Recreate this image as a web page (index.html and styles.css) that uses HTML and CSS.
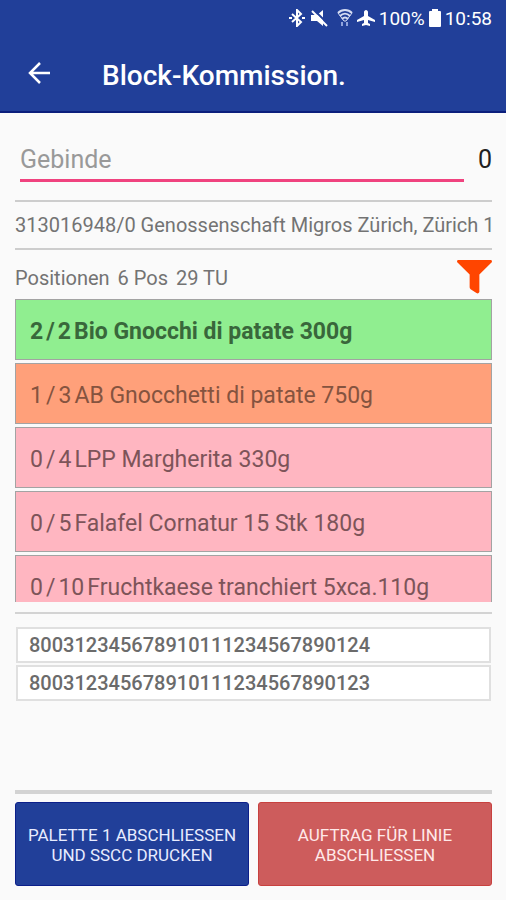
FILE: index.html
```html
<!DOCTYPE html>
<html lang="de">
<head>
    <meta charset="UTF-8">
    <meta name="viewport" content="width=device-width, initial-scale=1.0">
    <title>Block-Kommission</title>
    <link rel="stylesheet" href="styles.css">
</head>
<body>
    <header class="header">
        <div class="status">
            <svg width="18" height="18" viewBox="0 0 18 18" fill="none" stroke="#fff" stroke-width="2">
                <path d="M4 5l9 8-4 4V1l4 4-9 8"/>
                <path d="M1 9h3M14 9h3"/>
            </svg>
            <svg class="icon_mute" width="18" height="18" viewBox="0 0 18 18">
                <path d="M1 6h6l6-5v16l-6-5H1z" fill="#fff"/>
                <path d="M4 1l14 14" fill="none" stroke="#213f99" stroke-width="2"/>
                <path d="M2 2l15 15" fill="none" stroke="#fff" stroke-width="2"/>
            </svg>
            <svg width="16" height="18" viewBox="0 0 16 18" fill="none" stroke="#d5dcf2" stroke-width="2">
                <path d="M1 4c4-4 10-4 14 0M3 7c3-3 7-3 10 0M5 10c2-2 4-2 6 0"/>
                <path d="M1 4l6 8h2l6-8" stroke-width="1"/>
                <path d="M5 13v4M10 13v4" stroke="#8fa3dc"/>
            </svg>
            <svg width="18" height="18" viewBox="0 0 18 18" fill="#fff">
                <path d="M9 1c1 0 2 1 2 2v4l7 4v2l-7-2v3l2 1v2l-4-1-4 1v-2l2-1v-3l-7 2v-2l7-4V3c0-1 1-2 2-2z"/>
            </svg>
            <span>100%</span>
            <svg width="12" height="18" viewBox="0 0 12 18" fill="#fff">
                <path d="M3 0h6v2h2q1 0 1 1v14q0 1-1 1H1q-1 0-1-1V3q0-1 1-1h2z"/>
            </svg>
            <span>10:58</span>
        </div>
        <div class="toolbar">
            <button class="but_back" type="button" aria-label="Zurück">
                <svg width="24" height="24" viewBox="0 0 24 24" fill="none" stroke="#fff" stroke-width="2.5">
                    <path d="M23 11H3M13 1L3 11l10 10"/>
                </svg>
            </button>
            <h1>Block-Kommission.</h1>
        </div>
    </header>
    <main>
        <div class="sec_input">
            <input class="input_gebinde" type="text" placeholder="Gebinde" aria-label="Gebinde">
            <span class="count">0</span>
        </div>
        <p class="order">313016948/0 Genossenschaft Migros Zürich, Zürich 1</p>
        <div class="sec_pos">
            <span>Positionen</span>
            <span>6 Pos</span>
            <span>29 TU</span>
            <button class="but_filter" type="button" aria-label="Filter">
                <svg width="35" height="35" viewBox="0 0 36 36" fill="#ff4500">
                    <path d="M1 0h34q1 0 1 2L23 15v18q-1 2-3 1l-6-4q-1-1-1-2V15L0 2q0-2 1-2z"/>
                </svg>
            </button>
        </div>
        <ul class="positions">
            <li class="done"><span>2</span><span>/</span><span>2</span><span>Bio Gnocchi di patate 300g</span></li>
            <li class="partial"><span>1</span><span>/</span><span>3</span><span>AB Gnocchetti di patate 750g</span></li>
            <li><span>0</span><span>/</span><span>4</span><span>LPP Margherita 330g</span></li>
            <li><span>0</span><span>/</span><span>5</span><span>Falafel Cornatur 15 Stk 180g</span></li>
            <li><span>0</span><span>/</span><span>10</span><span>Fruchtkaese tranchiert 5xca.110g</span></li>
        </ul>
        <ul class="sscc">
            <li>800312345678910111234567890124</li>
            <li>800312345678910111234567890123</li>
        </ul>
        <div class="sec_buttons">
            <button class="but_palette" type="button">PALETTE 1 ABSCHLIESSEN UND SSCC DRUCKEN</button>
            <button class="but_order" type="button">AUFTRAG FÜR LINIE ABSCHLIESSEN</button>
        </div>
    </main>
</body>
</html>
```
FILE: styles.css
```css
*{
    box-sizing: border-box;
    font-family: Roboto, "Liberation Sans", sans-serif;
}
body{
    margin: 0;
    min-height: 100vh;
    display: flex;
    flex-direction: column;
    background-color: #fafafa;
    color: #737373;
}
.header{
    background-color: #213f99;
    border-bottom: 2px solid #0b1f7c;
    color: #fff;
}
.status{
    display: flex;
    justify-content: flex-end;
    align-items: center;
    gap: 4px;
    height: 36px;
    padding-right: 14px;
    font-size: 19px;
}
.icon_mute{
    margin-right: 5px;
}
.toolbar{
    display: flex;
    align-items: center;
    gap: 51px;
    height: 75px;
    padding: 0 27px;
}
.toolbar h1{
    margin: 0;
    padding-top: 3px;
    font-size: 28px;
    font-weight: 500;
}
.but_back, .but_filter{
    display: flex;
    padding: 0;
    border: none;
    background: none;
}
main{
    flex: 1;
    display: flex;
    flex-direction: column;
    padding: 23px 14px 14px 15px;
}
.sec_input{
    display: flex;
    align-items: center;
    margin-bottom: 18px;
    padding-left: 5px;
}
.input_gebinde{
    flex: 1;
    min-width: 0;
    height: 46px;
    padding: 3px 0 0;
    border: none;
    border-bottom: 3px solid #f0437f;
    background: none;
    font-size: 25px;
    outline: none;
}
.input_gebinde::placeholder{
    color: #999;
}
.count{
    padding-left: 14px;
    font-size: 25px;
    color: #212121;
}
.order{
    margin: 0;
    border-top: 2px solid #cdcdcd;
    border-bottom: 2px solid #cdcdcd;
    font-size: 20px;
    line-height: 46px;
    white-space: nowrap;
}
.sec_pos{
    display: flex;
    align-items: center;
    gap: 8px;
    height: 49px;
    padding-top: 6px;
    font-size: 20px;
}
.but_filter{
    margin-left: auto;
}
.positions{
    display: flex;
    flex-direction: column;
    gap: 3px;
    height: 303px;
    margin: 0 0 10px;
    padding: 0;
    overflow: hidden;
    list-style: none;
}
.positions li{
    display: flex;
    flex-shrink: 0;
    align-items: center;
    gap: 3px;
    height: 61px;
    padding: 3px 14px 0;
    border: 1px solid #a3a3a3;
    background-color: #ffb6c1;
    color: #7d5459;
    font-size: 23px;
}
.positions .done{
    background-color: #90ee90;
    color: #39673b;
    font-weight: bold;
}
.positions .partial{
    background-color: #ffa07a;
    color: #85533f;
}
.sscc{
    display: flex;
    flex-direction: column;
    gap: 2px;
    margin: 0;
    padding: 13px 1px 0;
    border-top: 2px solid #d3d3d3;
    list-style: none;
}
.sscc li{
    padding: 0 11px;
    border: 2px solid #e0e0e0;
    background-color: #fff;
    font-size: 20px;
    font-weight: 500;
    line-height: 32px;
    color: #6b6b6b;
}
.sec_buttons{
    display: grid;
    grid-template-columns: 1fr 1fr;
    gap: 9px;
    margin-top: auto;
    padding-top: 8px;
    border-top: 4px solid #d3d3d3;
}
.sec_buttons button{
    height: 84px;
    padding: 2px 8px 0;
    border: 1px solid #0c1f8a;
    border-radius: 3px;
    background-color: #213f99;
    color: #e8ecff;
    font-size: 17px;
    line-height: 20px;
}
.sec_buttons .but_order{
    padding: 2px 36px 0;
    border-color: #c8413f;
    background-color: #cd5c5c;
    color: #ffe9e9;
}
```
